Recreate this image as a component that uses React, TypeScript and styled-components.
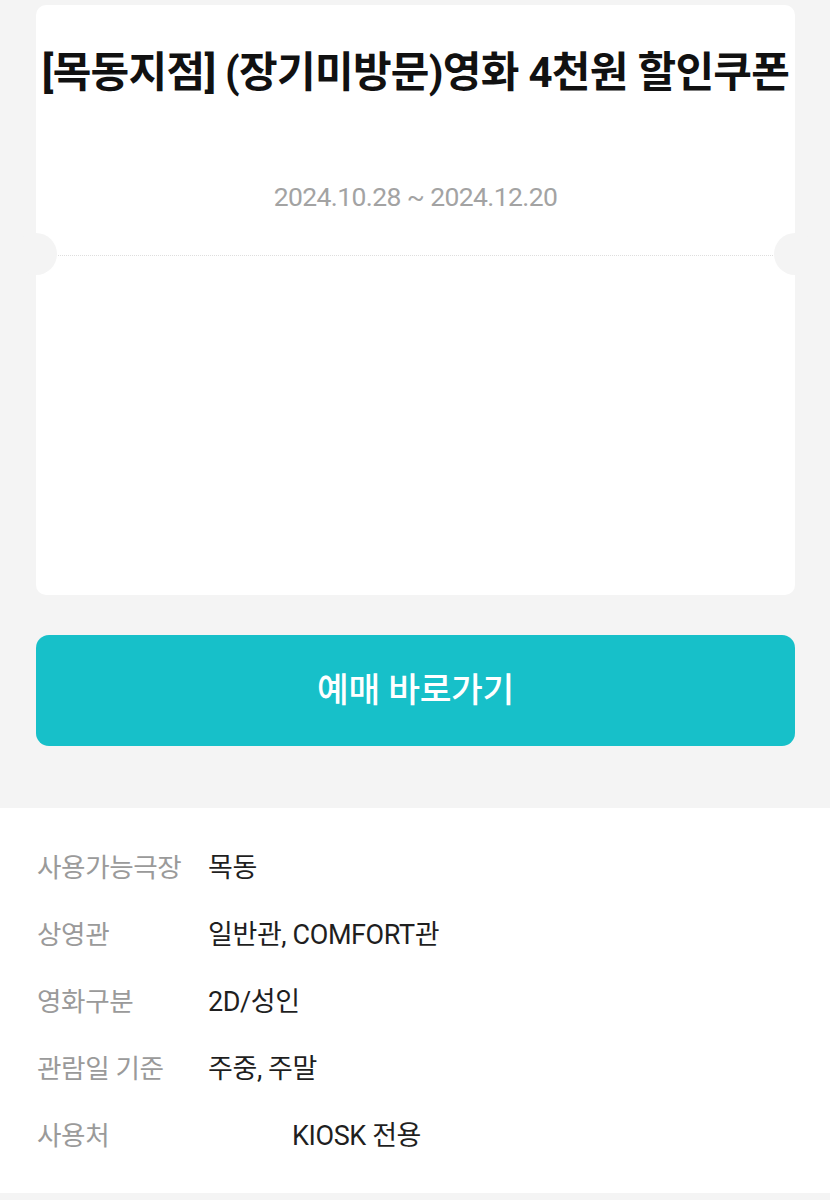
import React from "react"
import styled, { createGlobalStyle } from "styled-components"

const GlobalStyle = createGlobalStyle`
  html, body {
    margin: 0;
    padding: 0;
    background: #ffffff;
  }
  body {
    font-family: Roboto, "Noto Sans CJK KR", "Noto Sans", sans-serif;
    -webkit-font-smoothing: antialiased;
  }
`

const infoRows = [
  { label: "사용가능극장", value: "목동" },
  { label: "상영관", value: "일반관, COMFORT관" },
  { label: "영화구분", value: "2D/성인" },
  { label: "관람일 기준", value: "주중, 주말" },
  { label: "사용처", value: "KIOSK 전용", indent: true },
]

export default function App() {
  return (
    <>
      <GlobalStyle />
      <StyledTop>
        <Coupon>
          <CouponHead>
            <Title>[목동지점] (장기미방문)영화 4천원 할인쿠폰</Title>
            <Period>2024.10.28 ~ 2024.12.20</Period>
          </CouponHead>
          <Perforation>
            <DottedLine />
          </Perforation>
          <CouponBody />
        </Coupon>
        <BookButton type="button">예매 바로가기</BookButton>
      </StyledTop>
      <InfoList>
        {infoRows.map(row => (
          <InfoRow key={row.label}>
            <dt>{row.label}</dt>
            <InfoValue $indent={row.indent}>{row.value}</InfoValue>
          </InfoRow>
        ))}
      </InfoList>
      <BottomStrip />
    </>
  )
}

const StyledTop = styled.section`
  background: #f4f4f4;
  padding: 5px 35px 62px 36px;
  display: flex;
  flex-direction: column;
  gap: 40px;
`

const Coupon = styled.div`
  display: flex;
  flex-direction: column;
  height: 590px;
`

const CouponHead = styled.div`
  background: #fff;
  border-radius: 10px 10px 0 0;
  height: 248px;
  display: flex;
  flex-direction: column;
  align-items: center;
`

const Title = styled.h1`
  margin: 38px 0 0;
  font-size: 42px;
  font-weight: 700;
  line-height: 60px;
  letter-spacing: -0.7px;
  color: #111;
  white-space: nowrap;
`

const Period = styled.p`
  margin: 78px 0 0;
  font-size: 26.5px;
  line-height: 32px;
  color: #a3a3a3;
  letter-spacing: -0.6px;
`

const Perforation = styled.div`
  position: relative;
  height: 10px;
  background: #fff;
  padding: 2px 22px 0;

  &::before,
  &::after {
    content: "";
    position: absolute;
    top: -20px;
    width: 42px;
    height: 42px;
    border-radius: 50%;
    background: #f4f4f4;
    z-index: 1;
  }
  &::before {
    left: -21px;
  }
  &::after {
    right: -21px;
  }
`

const DottedLine = styled.div`
  border-top: 1px dotted #dedede;
`

const CouponBody = styled.div`
  flex: 1;
  background: #fff;
  border-radius: 0 0 10px 10px;
`

const BookButton = styled.button`
  height: 111px;
  border: none;
  border-radius: 13px;
  background: #17c0c9;
  color: #fff;
  font-family: Roboto, "Noto Sans CJK KR", sans-serif;
  font-size: 34.5px;
  font-weight: 500;
  letter-spacing: -0.3px;
  padding: 0 0 8px;
`

const InfoList = styled.dl`
  margin: 0;
  padding: 24px 36px 26px 37px;
  background: #fff;
`

const InfoRow = styled.div`
  display: flex;
  align-items: center;
  height: 67px;

  dt {
    width: 171px;
    font-size: 26.6px;
    color: #9a9a9a;
    letter-spacing: -0.4px;
  }
`

const InfoValue = styled.dd<{ $indent?: boolean }>`
  margin: 0 0 0 ${p => (p.$indent ? "84px" : "0")};
  font-size: 27px;
  color: #1f1f1f;
  letter-spacing: -0.4px;
`

const BottomStrip = styled.div`
  height: 8px;
  background: #f4f4f4;
`
